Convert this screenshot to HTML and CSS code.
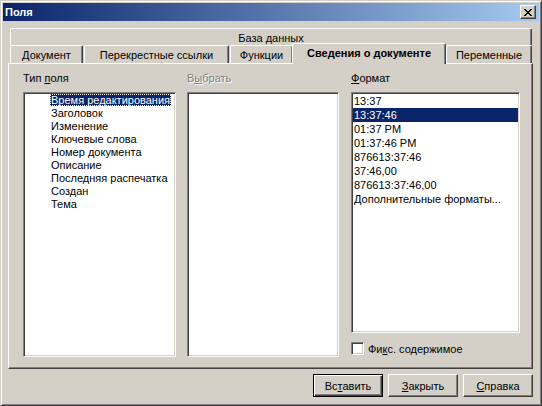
FILE: index.html
```html
<!DOCTYPE html>
<html>
<head>
  <meta charset="utf-8">
  <title>Поля</title>
  <link rel="stylesheet" href="styles.css">
</head>
<body>
  <div class="window">
    <div class="titlebar">
      <span class="title">Поля</span>
      <button class="close-btn" title="Закрыть">
        <svg width="8" height="7" viewBox="0 0 8 7" shape-rendering="crispEdges">
          <path d="M0 0h2v1H0zM6 0h2v1H6zM1 1h2v1H1zM5 1h2v1H5zM2 2h4v1H2zM3 3h2v1H3zM2 4h4v1H2zM1 5h2v1H1zM5 5h2v1H5zM0 6h2v1H0zM6 6h2v1H6z"/>
        </svg>
      </button>
    </div>

    <div class="tabs">
      <div class="tab-row tab-row-back">
        <div class="tab tab-db">База данных</div>
      </div>
      <div class="tab-row tab-row-front">
        <div class="tab tab-doc">Документ</div>
        <div class="tab tab-xref">Перекрестные ссылки</div>
        <div class="tab tab-func">Функции</div>
        <div class="tab tab-info active">Сведения о документе</div>
        <div class="tab tab-vars">Переменные</div>
      </div>
    </div>

    <div class="panel">
      <div class="field-col col-type">
        <div class="field-label">Тип <u>п</u>оля</div>
        <div class="listbox tree">
          <div class="tree-item selected"><span>Время редактирования</span></div>
          <div class="tree-item"><span>Заголовок</span></div>
          <div class="tree-item"><span>Изменение</span></div>
          <div class="tree-item"><span>Ключевые слова</span></div>
          <div class="tree-item"><span>Номер документа</span></div>
          <div class="tree-item"><span>Описание</span></div>
          <div class="tree-item"><span>Последняя распечатка</span></div>
          <div class="tree-item"><span>Создан</span></div>
          <div class="tree-item"><span>Тема</span></div>
        </div>
      </div>

      <div class="field-col col-select">
        <div class="field-label disabled">В<u>ы</u>брать</div>
        <div class="listbox"></div>
      </div>

      <div class="field-col col-format">
        <div class="field-label"><u>Ф</u>ормат</div>
        <div class="listbox format-list">
          <div class="format-item">13:37</div>
          <div class="format-item selected">13:37:46</div>
          <div class="format-item">01:37 PM</div>
          <div class="format-item">01:37:46 PM</div>
          <div class="format-item">876613:37:46</div>
          <div class="format-item">37:46,00</div>
          <div class="format-item">876613:37:46,00</div>
          <div class="format-item">Дополнительные форматы...</div>
        </div>
        <label class="check">
          <span class="check-box"></span>
          <span>Фи<u>к</u>с. содержимое</span>
        </label>
      </div>
    </div>

    <div class="buttons">
      <button class="btn btn-default">Вс<u>т</u>авить</button>
      <button class="btn"><u>З</u>акрыть</button>
      <button class="btn"><u>С</u>правка</button>
    </div>
  </div>
</body>
</html>
```

FILE: styles.css
```css
* {
  box-sizing: border-box;
}
body {
  margin: 0;
  font-family: "Liberation Sans", Arial, sans-serif;
  font-size: 11px;
  color: #000;
  background: #d4d0c8;
}
u {
  text-underline-offset: 1px;
}

/* dialog frame */
.window {
  width: 542px;
  height: 406px;
  display: flex;
  flex-direction: column;
  padding: 2px;
  background: #d4d0c8;
  border: 1px solid;
  border-color: #d4d0c8 #404040 #404040 #d4d0c8;
  box-shadow: inset 1px 1px #fff, inset -1px -1px #808080;
}
.titlebar {
  height: 18px;
  flex: none;
  display: flex;
  align-items: center;
  padding: 0 3px 0 2px;
  background: linear-gradient(to right, #0a246a, #a6caf0);
}
.title {
  flex: 1;
  color: #fff;
  font-weight: bold;
}
.close-btn {
  width: 16px;
  height: 14px;
  padding: 0;
  display: flex;
  align-items: center;
  justify-content: center;
  background: #d4d0c8;
  border: 1px solid;
  border-color: #fff #404040 #404040 #fff;
  box-shadow: inset -1px -1px #808080;
}

/* tab strip, two rows */
.tabs {
  margin: 7px 7px 0 7px;
  flex: none;
}
.tab-row {
  display: flex;
}
.tab-row-back {
  height: 17px;
}
.tab-row-front {
  height: 18px;
  align-items: flex-end;
}
.tab {
  height: 18px;
  padding-top: 3px;
  line-height: 13px;
  text-align: center;
  white-space: nowrap;
  background: #d4d0c8;
  border: 1px solid;
  border-color: #fff #404040 transparent #fff;
  border-bottom: 0;
  border-radius: 2px 2px 0 0;
  box-shadow: inset -1px 0 #808080;
  margin-right: 1px;
}
.tab-db {
  flex: 1;
  height: 17px;
  margin-right: 0;
}
.tab-doc { width: 73px; }
.tab-xref { width: 145px; }
.tab-func { width: 63px; }
.tab-vars {
  flex: 1;
  margin-right: 0;
}
.tab.active {
  width: 154px;
  height: 21px;
  margin: 0 0 -1px -2px;
  position: relative;
  z-index: 1;
  font-weight: bold;
}

/* page of the active tab */
.panel {
  height: 306px;
  flex: none;
  margin: 0 6px 0 5px;
  display: flex;
  gap: 11px;
  padding: 8px 12px 11px 14px;
  border: 1px solid;
  border-color: #fff #404040 #404040 #fff;
  box-shadow: inset -1px -1px #808080;
}
.field-col {
  display: flex;
  flex-direction: column;
}
.col-type { width: 153px; }
.col-select { width: 152px; margin-right: 1px; }
.col-format { flex: 1; }
.field-label {
  height: 13px;
  line-height: 13px;
  margin-bottom: 7px;
}
.field-label.disabled {
  color: #808080;
  text-shadow: 1px 1px #fff;
}

.listbox {
  flex: 1;
  padding: 1px;
  background: #fff;
  border: 1px solid;
  border-color: #808080 #fff #fff #808080;
  box-shadow: inset 1px 1px #404040, inset -1px -1px #d4d0c8;
  overflow: hidden;
}
.tree-item {
  height: 13px;
  line-height: 13px;
  padding-left: 25px;
  white-space: nowrap;
}
.tree-item span {
  padding: 0 1px;
}
.tree-item.selected span {
  background: #0a246a;
  color: #fff;
  outline: 1px dotted #fff;
  outline-offset: -1px;
}

.format-list {
  flex: none;
  height: 241px;
}
.format-item {
  height: 14px;
  line-height: 14px;
  padding-left: 1px;
  white-space: nowrap;
}
.format-item.selected {
  background: #0a246a;
  color: #fff;
}

.check {
  display: flex;
  align-items: center;
  gap: 4px;
  margin-top: 9px;
}
.check-box {
  width: 13px;
  height: 13px;
  background: #fff;
  border: 1px solid;
  border-color: #808080 #fff #fff #808080;
  box-shadow: inset 1px 1px #404040, inset -1px -1px #d4d0c8;
}

/* dialog buttons */
.buttons {
  display: flex;
  justify-content: flex-end;
  gap: 5px;
  margin-top: 5px;
  padding-right: 6px;
}
.btn {
  width: 70px;
  height: 23px;
  padding: 0;
  font: inherit;
  color: #000;
  background: #d4d0c8;
  border: 1px solid;
  border-color: #fff #404040 #404040 #fff;
  box-shadow: inset -1px -1px #808080;
}
.btn-default {
  border-color: #000;
  box-shadow: inset 1px 1px #fff, inset -1px -1px #404040, inset -2px -2px #808080;
}
```
